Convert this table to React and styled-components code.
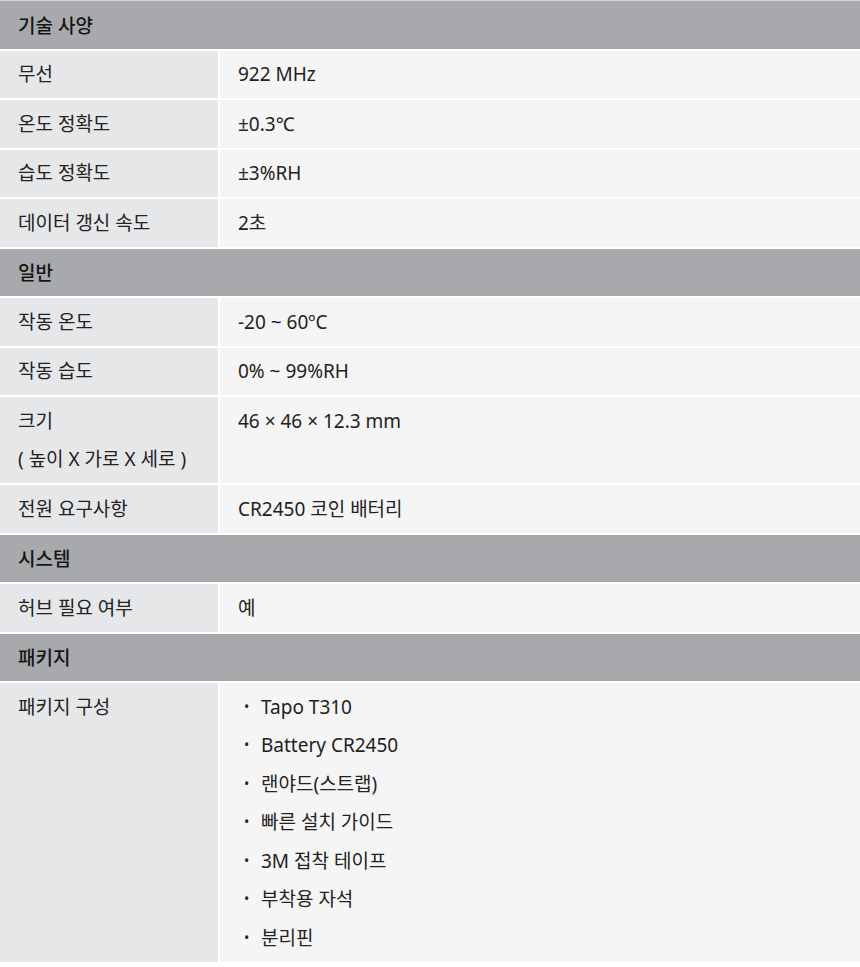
import React from 'react';
import styled, { createGlobalStyle } from 'styled-components';

const GlobalStyle = createGlobalStyle`
  html, body {
    margin: 0;
    padding: 0;
    background: #ffffff;
  }
  body {
    font-family: "Noto Sans", "Noto Sans CJK KR", sans-serif;
    color: #222222;
  }
`;

const specs = [
    {
        title: '기술 사양',
        rows: [
            { label: ['무선'], value: ['922 MHz'] },
            { label: ['온도 정확도'], value: ['±0.3℃'] },
            { label: ['습도 정확도'], value: ['±3%RH'] },
            { label: ['데이터 갱신 속도'], value: ['2초'] },
        ],
    },
    {
        title: '일반',
        rows: [
            { label: ['작동 온도'], value: ['-20 ~ 60ºC'] },
            { label: ['작동 습도'], value: ['0% ~ 99%RH'] },
            { label: ['크기', '( 높이 X 가로 X 세로 )'], value: ['46 × 46 × 12.3 mm'] },
            { label: ['전원 요구사항'], value: ['CR2450 코인 배터리'] },
        ],
    },
    {
        title: '시스템',
        rows: [
            { label: ['허브 필요 여부'], value: ['예'] },
        ],
    },
    {
        title: '패키지',
        rows: [
            {
                label: ['패키지 구성'],
                list: [
                    'Tapo T310',
                    'Battery CR2450',
                    '랜야드(스트랩)',
                    '빠른 설치 가이드',
                    '3M 접착 테이프',
                    '부착용 자석',
                    '분리핀',
                ],
            },
        ],
    },
];

const App = () => {
    return (
        <>
            <GlobalStyle />
            <Table>
                {specs.map((section) => (
                    <React.Fragment key={section.title}>
                        <SectionHeader>{section.title}</SectionHeader>
                        {section.rows.map((row) => (
                            <React.Fragment key={row.label[0]}>
                                <LabelCell>
                                    {row.label.map((line) => (
                                        <Line key={line}>{line}</Line>
                                    ))}
                                </LabelCell>
                                <ValueCell>
                                    {row.list ? (
                                        <BulletList>
                                            {row.list.map((item) => (
                                                <BulletItem key={item}>{item}</BulletItem>
                                            ))}
                                        </BulletList>
                                    ) : (
                                        row.value.map((line) => <Line key={line}>{line}</Line>)
                                    )}
                                </ValueCell>
                            </React.Fragment>
                        ))}
                    </React.Fragment>
                ))}
            </Table>
        </>
    );
};

const Table = styled.div`
display: grid;
grid-template-columns: 218px 1fr;
gap: 2px;
width: 860px;
background: #ffffff;
border-top: 1px solid #d4d5d7;
font-size: 19px;
`

const SectionHeader = styled.div`
grid-column: 1 / -1;
background: #a8a9ac;
color: #151515;
font-weight: 500;
height: 47.5px;
display: flex;
align-items: center;
padding-left: 18px;
box-sizing: border-box;
`

const LabelCell = styled.div`
background: #e6e7e9;
padding: 4.5px 18px;
min-height: 47.5px;
box-sizing: border-box;
`

const ValueCell = styled.div`
background: #f5f5f5;
padding: 4.5px 18px;
min-height: 47.5px;
box-sizing: border-box;
`

const Line = styled.div`
line-height: 38.5px;
`

const BulletList = styled.ul`
list-style: none;
margin: 0;
padding: 0 0 0 6px;
`

const BulletItem = styled.li`
line-height: 38.5px;
display: flex;
&::before {
    content: "•";
    width: 17px;
    font-size: 14px;
}
`

export default App
